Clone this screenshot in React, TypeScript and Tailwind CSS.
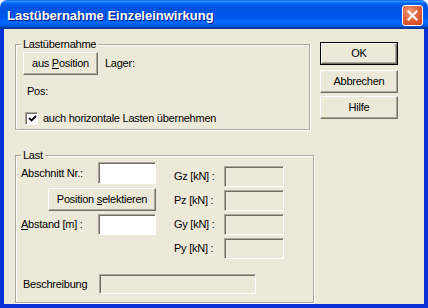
import React from "react";

const btn =
  "flex items-center justify-center bg-[#ece9d8] border border-t-white border-l-white border-r-[#716f64] border-b-[#716f64] shadow-[inset_-1px_-1px_0_#aca899] text-black leading-none";
const sunken =
  "border border-t-[#aca899] border-l-[#aca899] border-b-white border-r-white shadow-[inset_1px_1px_0_#716f64]";

function Group({
  label,
  className,
  children,
}: {
  label: string;
  className: string;
  children: React.ReactNode;
}) {
  return (
    <div
      className={
        "relative border border-[#aca899] shadow-[inset_1px_1px_0_white,1px_1px_0_white] " +
        className
      }
    >
      <span className="absolute -top-[7px] left-[5px] bg-[#ece9d8] px-[2px] leading-[13px]">
        {label}
      </span>
      {children}
    </div>
  );
}

function Field({ white, className }: { white?: boolean; className: string }) {
  return (
    <div
      className={
        sunken + " " + (white ? "bg-white " : "bg-[#ece9d8] ") + className
      }
    />
  );
}

export default function App() {
  return (
    <div className="w-[428px] h-[308px] bg-white font-['Liberation_Sans',Arial,sans-serif] text-[11px] tracking-[-0.25px] text-black">
      <div className="w-[428px] h-[308px] flex flex-col rounded-t-[7px] overflow-hidden">
        {/* Title bar */}
        <div className="h-[29px] shrink-0 flex items-center justify-between pl-[7px] pr-[5px] bg-[linear-gradient(to_bottom,#0058ee_0%,#3593ff_4%,#288eff_6%,#127dff_8%,#036ffc_10%,#0262ee_14%,#0057e5_20%,#0054e3_24%,#0055eb_56%,#005bf5_66%,#026afe_76%,#0062ef_86%,#0052d6_92%,#0040ab_94%,#003092_100%)]">
          <span className="text-white font-bold text-[13px] tracking-[0px] mt-[2px] [text-shadow:1px_1px_0_#0a1883]">
            Lastübernahme Einzeleinwirkung
          </span>
          <div className="w-[21px] h-[21px] mt-[1px] rounded-[3px] border border-white bg-[radial-gradient(circle_at_35%_30%,#f29a7c_0%,#e2643e_45%,#c93f1a_100%)] flex items-center justify-center">
            <svg width="11" height="11" viewBox="0 0 11 11">
              <path
                d="M1.5 1.5 L9.5 9.5 M9.5 1.5 L1.5 9.5"
                stroke="white"
                strokeWidth="2.2"
                strokeLinecap="square"
              />
            </svg>
          </div>
        </div>

        {/* Body */}
        <div className="flex-1 bg-[#ece9d8] border-l-[4px] border-r-[4px] border-b-[4px] border-[#0831d9] pt-[13px] pl-[11px] flex gap-[6px] overflow-hidden">
          {/* Left column */}
          <div className="w-[299px] mt-[2px] flex flex-col">
            <Group label="Lastübernahme" className="w-[295px] h-[86px] pt-[7px] pl-[7px]">
              <div className="flex items-center">
                <div className={btn + " w-[75px] h-[23px]"}>
                  aus&nbsp;<u>P</u>osition
                </div>
                <span className="ml-[7px]">Lager:</span>
              </div>
              <div className="ml-[4px] mt-[10px] leading-[13px]">Pos:</div>
              <div className="flex items-center mt-[12px] ml-[2px]">
                <div className={sunken + " w-[13px] h-[13px] bg-white flex items-center justify-center"}>
                  <svg width="9" height="9" viewBox="0 0 9 9" className="ml-[1px] mt-[1px]">
                    <path d="M1 4 L3.5 6.5 L8 2" stroke="black" strokeWidth="1.8" fill="none" />
                  </svg>
                </div>
                <span className="ml-[5px]">auch horizontale Lasten übernehmen</span>
              </div>
            </Group>

            <Group label="Last" className="mt-[25px] w-[299px] h-[148px] pl-[5px]">
              <div className="flex">
                {/* left sub-column */}
                <div className="w-[135px] pt-[6px] flex flex-col">
                  <div className="flex items-center justify-between">
                    <span>Abschnitt Nr.:</span>
                    <Field white className="w-[58px] h-[22px]" />
                  </div>
                  <div className="flex justify-end mt-[4px]">
                    <div className={btn + " w-[108px] h-[23px]"}>
                      Position&nbsp;<u>s</u>elektieren
                    </div>
                  </div>
                  <div className="flex items-center justify-between mt-[3px]">
                    <span>
                      <u>A</u>bstand [m] :
                    </span>
                    <Field white className="w-[58px] h-[21px]" />
                  </div>
                </div>
                {/* right sub-column */}
                <div className="ml-[18px] pt-[10px] flex flex-col gap-[3px]">
                  {["Gz [kN] :", "Pz [kN] :", "Gy [kN] :", "Py [kN] :"].map((l) => (
                    <div key={l} className="flex items-center">
                      <span className="w-[50px]">{l}</span>
                      <Field className="w-[60px] h-[21px]" />
                    </div>
                  ))}
                </div>
              </div>
              <div className="flex items-center mt-[15px] ml-[2px]">
                <span className="w-[76px]">Beschreibung</span>
                <Field className="w-[157px] h-[20px]" />
              </div>
            </Group>
          </div>

          {/* Right buttons */}
          <div className="w-[78px] flex flex-col">
            <div className="w-[78px] h-[23px] border border-black">
              <div className={btn + " w-full h-full"}>OK</div>
            </div>
            <div className={btn + " w-[78px] h-[23px] mt-[5px]"}>Abbrechen</div>
            <div className={btn + " w-[78px] h-[23px] mt-[3px]"}>Hilfe</div>
          </div>
        </div>
      </div>
    </div>
  );
}
